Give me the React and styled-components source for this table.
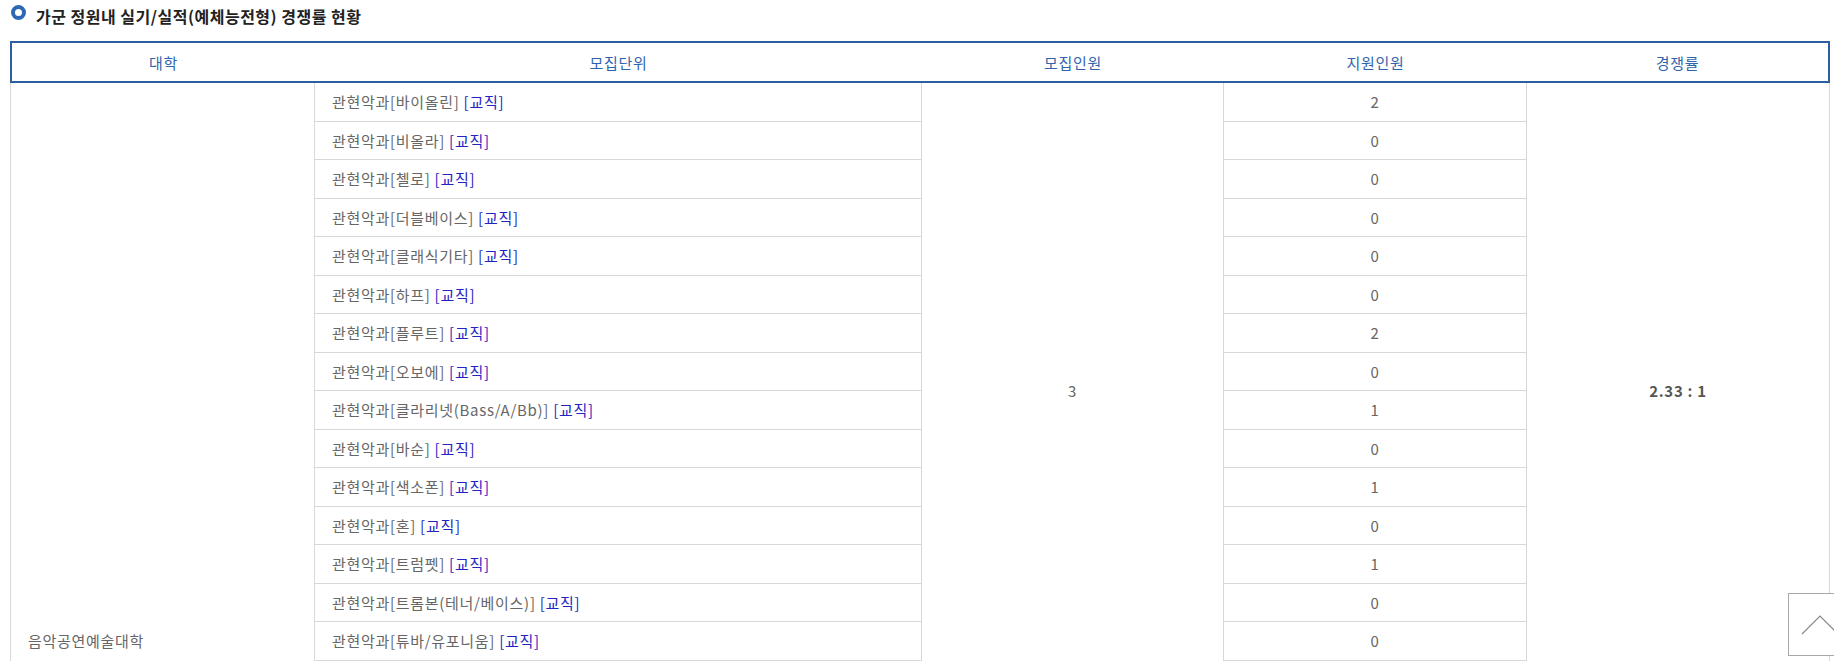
import { createGlobalStyle, styled } from "styled-components";

const GlobalStyle = createGlobalStyle`
    html, body {
        margin : 0;
        padding : 0;
        overflow : hidden;
        background : #fff;
    }
    body {
        font-family : "Noto Sans CJK KR", "Noto Sans", sans-serif;
    }
`

const Page = styled.div`
    padding-left : 10px;
`

const Title = styled.h3`
    display : flex;
    align-items : center;
    column-gap : 10px;
    height : 32px;
    margin : 0 0 9px 0;
    font-size : 16px;
    letter-spacing : 0.5px;
    font-weight : bold;
    color : #222;
`

const Bullet = styled.span`
    display : inline-block;
    box-sizing : border-box;
    width : 15px;
    height : 15px;
    margin : -8px 0 0 1px;
    border-radius : 50%;
    border : 4px solid #2d68b3;
    background : #fff;
`

const Table = styled.table`
    width : 1820px;
    table-layout : fixed;
    border-collapse : separate;
    border-spacing : 0;
    font-size : 15px;
    letter-spacing : 0.7px;
`

const HeadCell = styled.th`
    height : 42px;
    box-sizing : border-box;
    padding : 0;
    font-weight : normal;
    color : #2f64ad;
    text-align : center;
    border-top : 2px solid #2d5f9f;
    border-bottom : 2px solid #2d5f9f;
    border-left : ${({ $first }) => ($first ? "2px solid #2d5f9f" : "0")};
    border-right : ${({ $last }) => ($last ? "2px solid #2d5f9f" : "0")};
`

const Row = styled.tr`
    height : 38.5px;
`

const Cell = styled.td`
    padding : ${({ $align }) => ($align === "left" ? "0 0 0 17px" : "0")};
    color : ${({ $strong }) => ($strong ? "#555" : "#666")};
    font-weight : ${({ $strong }) => ($strong ? "bold" : "normal")};
    text-align : ${({ $align }) => $align || "center"};
    vertical-align : middle;
    border-right : 1px solid #d8d8d8;
    border-bottom : 1px solid #d8d8d8;
    border-left : ${({ $first }) => ($first ? "1px solid #d8d8d8" : "0")};
    white-space : nowrap;
`

const CollegeCell = styled(Cell)`
    padding-left : 17px;
`

const Tag = styled.span`
    color : #2323c4;
`

const TopButton = styled.button`
    position : fixed;
    left : 1788px;
    top : 593px;
    width : 64px;
    height : 63px;
    padding : 0;
    border : 1px solid #a8a8a8;
    background : #fff;
    cursor : pointer;
`

const groups = [
    {
        quota : 3,
        rate : "2.33 : 1",
        units : [
            ["관현악과[바이올린]", 2],
            ["관현악과[비올라]", 0],
            ["관현악과[첼로]", 0],
            ["관현악과[더블베이스]", 0],
            ["관현악과[클래식기타]", 0],
            ["관현악과[하프]", 0],
            ["관현악과[플루트]", 2],
            ["관현악과[오보에]", 0],
            ["관현악과[클라리넷(Bass/A/Bb)]", 1],
            ["관현악과[바순]", 0],
            ["관현악과[색소폰]", 1],
            ["관현악과[혼]", 0],
            ["관현악과[트럼펫]", 1],
            ["관현악과[트롬본(테너/베이스)]", 0],
            ["관현악과[튜바/유포니움]", 0],
            ["관현악과[타악기]", 0],
        ]
    },
    {
        quota : 2,
        rate : "3.50 : 1",
        units : [
            ["성악과[소프라노]", 3],
            ["성악과[메조소프라노]", 1],
            ["성악과[테너]", 2],
            ["성악과[바리톤/베이스]", 1],
        ]
    },
    {
        quota : 2,
        rate : "4.00 : 1",
        units : [
            ["피아노과", 8],
        ]
    },
    {
        quota : 2,
        rate : "2.50 : 1",
        units : [
            ["작곡과", 5],
        ]
    },
    {
        quota : 3,
        rate : "2.00 : 1",
        units : [
            ["국악과[가야금]", 2],
            ["국악과[거문고]", 1],
            ["국악과[해금]", 1],
            ["국악과[대금]", 1],
            ["국악과[피리]", 0],
            ["국악과[판소리]", 1],
            ["국악과[타악]", 0],
        ]
    },
]

function ChevronUp() {
    return (
        <svg width="62" height="61" viewBox="0 0 62 61">
            <polyline points="13,40 31,22 49,40" fill="none" stroke="#8a8a8a" strokeWidth="1.2" />
        </svg>
    )
}

function App() {
    const totalRows = groups.reduce((sum, g) => sum + g.units.length, 0);

    return (
        <Page>
            <GlobalStyle />
            <Title><Bullet /> 가군 정원내 실기/실적(예체능전형) 경쟁률 현황</Title>
            <Table>
                <colgroup>
                    <col style={{width : "305px"}} />
                    <col style={{width : "607px"}} />
                    <col style={{width : "302px"}} />
                    <col style={{width : "303px"}} />
                    <col style={{width : "303px"}} />
                </colgroup>
                <thead>
                    <tr>
                        <HeadCell $first>대학</HeadCell>
                        <HeadCell>모집단위</HeadCell>
                        <HeadCell>모집인원</HeadCell>
                        <HeadCell>지원인원</HeadCell>
                        <HeadCell $last>경쟁률</HeadCell>
                    </tr>
                </thead>
                <tbody>
                    {groups.map((group, gi) => group.units.map(([name, applied], ui) => (
                        <Row key={`row-${gi}-${ui}`}>
                            {gi === 0 && ui === 0 && (
                                <CollegeCell $first $align="left" rowSpan={totalRows}>음악공연예술대학</CollegeCell>
                            )}
                            <Cell $align="left">{name} <Tag>[교직]</Tag></Cell>
                            {ui === 0 && <Cell rowSpan={group.units.length}>{group.quota}</Cell>}
                            <Cell>{applied}</Cell>
                            {ui === 0 && <Cell $strong rowSpan={group.units.length}>{group.rate}</Cell>}
                        </Row>
                    )))}
                </tbody>
            </Table>
            <TopButton aria-label="맨 위로"><ChevronUp /></TopButton>
        </Page>
    )
}

export default App;
